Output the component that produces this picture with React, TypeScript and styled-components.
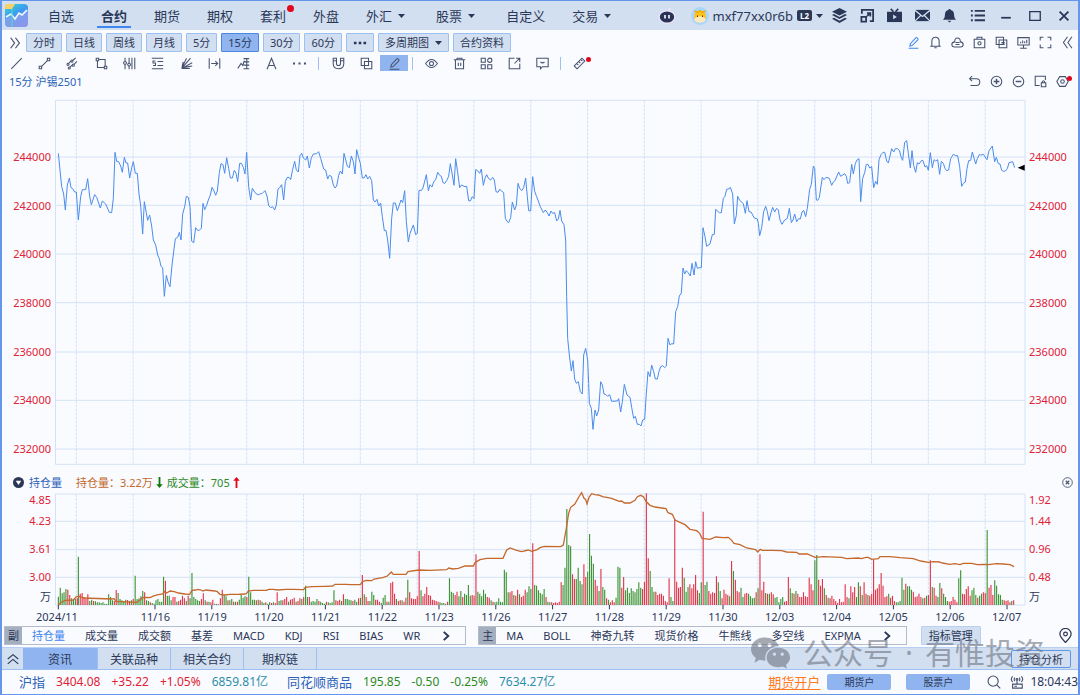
import React from "react";
import styled, { createGlobalStyle } from "styled-components";

const c = {
  bar: "#d2dff1",
  page: "#fafbff",
  line: "#d3e2f6",
  edge: "#6497ea",
  soft: "#9dc0f2",
  active: "#8fb4ef",
  ink: "#2b3757",
  icon: "#46526e",
  blue: "#2c62b8",
  bright: "#3f86f0",
  red: "#e02235",
  green: "#2c8a1e",
  teal: "#2e8ea8",
  orange: "#ff7a1a",
  brown: "#c4682c",
};

const Global = createGlobalStyle`
  * { box-sizing: border-box; }
  body { margin: 0; background: ${c.page}; }
  body, button { font-family: "Noto Sans", "Noto Sans CJK SC", sans-serif; color: ${c.ink}; }
  button { border: 0; padding: 0; margin: 0; background: none; cursor: pointer; }
  svg { display: block; flex: none; }
`;

const Window = styled.div`
  position: relative;
  display: flex;
  flex-direction: column;
  min-height: 100vh;
  border: solid ${c.edge};
  border-width: 1px 2px;
  overflow: hidden;
  font-size: 11px;
  line-height: 16px;
`;

/* ---------- title bar ---------- */
const TitleBar = styled.header`
  display: flex;
  align-items: center;
  height: 29px;
  padding-left: 3px;
  background: ${c.bar};
`;
const Nav = styled.nav`
  display: flex;
  gap: 27px;
  margin-left: 20px;
`;
const NavItem = styled.button<{ $active?: boolean }>`
  position: relative;
  display: flex;
  align-items: center;
  gap: 6px;
  height: 29px;
  font-size: 13px;
  white-space: nowrap;
  font-weight: ${(p) => (p.$active ? 700 : 400)};
  &::after {
    content: "";
    display: ${(p) => (p.$active ? "block" : "none")};
    position: absolute;
    left: -4px;
    right: -4px;
    bottom: 2px;
    height: 2px;
    background: ${c.bright};
  }
`;
const Dot = styled.i<{ $size: number }>`
  position: absolute;
  top: ${(p) => (p.$size > 5 ? 4 : 2)}px;
  right: ${(p) => (p.$size > 5 ? -8 : 1)}px;
  width: ${(p) => p.$size}px;
  height: ${(p) => p.$size}px;
  border-radius: 50%;
  background: #e3061a;
`;
const Account = styled.button`
  display: flex;
  align-items: center;
  height: 29px;
  gap: 4px;
  margin-left: auto;
  font-size: 13px;
`;
const Assistant = styled.span`
  margin-right: 11px;
`;
const Level = styled.span`
  padding: 0 3px;
  border-radius: 2px;
  background: ${c.ink};
  color: #fff;
  font-size: 8px;
  font-weight: 700;
  line-height: 11px;
`;
const IconGroup = styled.div<{ $cols: number; $width: number }>`
  display: grid;
  flex: none;
  grid-template-columns: repeat(${(p) => p.$cols}, 1fr);
  width: ${(p) => p.$width}px;
`;
const IconButton = styled.button<{ $on?: boolean; $tone?: string }>`
  position: relative;
  display: flex;
  align-items: center;
  justify-content: center;
  height: 16px;
  color: ${(p) => p.$tone ?? c.icon};
  background: ${(p) => (p.$on ? c.active : "transparent")};
`;

/* ---------- tool bars ---------- */
const PeriodBar = styled.div`
  display: flex;
  align-items: center;
  gap: 4px;
  height: 25px;
  padding-left: 6px;
`;
const Period = styled.button<{ $active?: boolean }>`
  display: flex;
  align-items: center;
  gap: 6px;
  height: 19px;
  padding: 0 6px;
  border: 1px solid ${(p) => (p.$active ? "#4a86e4" : c.soft)};
  border-radius: 1px;
  background: ${(p) => (p.$active ? c.active : c.bar)};
  font-size: 11px;
  line-height: 16px;
  white-space: nowrap;
`;
const Right = styled.div`
  display: flex;
  margin-left: auto;
`;
const DrawBar = styled.div`
  display: flex;
  align-items: center;
  height: 16px;
`;
const Divider = styled.span`
  width: 1px;
  height: 13px;
  margin: 0 5px 0 4px;
  background: ${c.soft};
`;
const SymbolBar = styled.div`
  display: flex;
  align-items: center;
  height: 21px;
  padding: 0 5px 0 7px;
  color: ${c.blue};
`;

/* ---------- charts ---------- */
const Pane = styled.section`
  display: grid;
  grid-template-columns: 53px minmax(0, 1fr) 53px;
`;
const PricePane = styled(Pane)`
  flex: 1;
  min-height: 365px;
  margin-top: 8px;
`;
const VolumePane = styled(Pane)`
  height: 112px;
`;
const PriceScale = styled.div<{ $side: "left" | "right" }>`
  display: flex;
  flex-direction: column;
  justify-content: space-between;
  padding: 49px 4px 8px;
  color: ${c.red};
  text-align: ${(p) => (p.$side === "left" ? "right" : "left")};
`;
const VolumeScale = styled.div<{ $side: "left" | "right" }>`
  display: grid;
  grid-template-rows: 14px 28px 28px 28px 12px;
  align-items: center;
  padding: 0 4px;
  color: ${c.red};
  text-align: ${(p) => (p.$side === "left" ? "right" : "left")};
  & > :last-child { color: ${c.ink}; }
`;
const Plot = styled.svg`
  width: 100%;
  height: 100%;
  min-height: 0;
  overflow: visible;
`;
const PaneHead = styled.div`
  display: flex;
  align-items: center;
  height: 28px;
  padding: 7px 5px 0 11px;
`;
const PaneTitle = styled.span`
  margin: 0 14px 0 5px;
  color: ${c.blue};
`;
const Reading = styled.span<{ $tone: string }>`
  display: flex;
  align-items: center;
  gap: 3px;
  margin-right: 4px;
  color: ${(p) => p.$tone};
`;
const Dates = styled.div`
  display: flex;
  height: 20px;
  padding: 4px 43px 0 0;
  text-align: center;
`;
const FirstDate = styled.span`
  width: 125px;
  padding-left: 34px;
  text-align: left;
`;
const DateLabel = styled.span`
  flex: 1;
`;

/* ---------- indicator pickers ---------- */
const Indicators = styled.div`
  display: flex;
  align-items: center;
  height: 19px;
  margin: 1px 0 2px 2px;
`;
const Picker = styled.div`
  display: flex;
  align-items: center;
  gap: 20px;
  height: 19px;
  margin-right: 12px;
  padding-right: 13px;
  border: 1px solid #b4bccb;
`;
const PickerName = styled.span`
  width: 17px;
  margin-right: -10px;
  background: #a3aebf;
  line-height: 17px;
  text-align: center;
`;
const PickerItem = styled.button<{ $active?: boolean }>`
  color: ${(p) => (p.$active ? c.bright : c.ink)};
  font-size: 11px;
  line-height: 17px;
  white-space: nowrap;
`;
const Manage = styled(Period)`
  margin-left: 2px;
  padding: 0 7px;
  border-color: #b9d0f2;
`;
const Pin = styled.button`
  margin: 0 5px 0 auto;
`;

/* ---------- bottom tabs and status ---------- */
const Tabs = styled.div`
  display: flex;
  align-items: stretch;
  height: 23px;
  border-top: 1px solid #b7d0f3;
  border-bottom: 1px solid ${c.soft};
  background: ${c.bar};
`;
const Tab = styled.button<{ $active?: boolean }>`
  width: ${(p) => (p.$active ? 75 : 73)}px;
  border-right: 1px solid ${c.soft};
  background: ${(p) => (p.$active ? c.active : "transparent")};
  font-size: 12px;
`;
const Collapse = styled.button`
  display: flex;
  align-items: center;
  justify-content: center;
  width: 21px;
`;
const Analysis = styled.button`
  align-self: center;
  height: 18px;
  margin: 0 7px 0 auto;
  padding: 0 7px;
  border: 1px solid #5f96ea;
  border-radius: 2px;
  font-size: 11px;
`;
const Status = styled.footer`
  display: flex;
  align-items: center;
  height: 24px;
  padding-left: 17px;
  font-size: 12px;
  white-space: nowrap;
`;
const Quote = styled.span<{ $tone: string }>`
  display: flex;
  gap: 11px;
  margin-right: 19px;
  color: ${(p) => p.$tone};
`;
const QuoteName = styled.span`
  color: ${c.blue};
  font-size: 13px;
`;
const Turnover = styled.span`
  color: ${c.teal};
`;
const OpenLink = styled.a`
  margin-left: auto;
  color: ${c.orange};
  font-size: 13px;
  text-underline-offset: 2px;
`;
const AccountButton = styled.button`
  width: 64px;
  height: 16px;
  margin-left: 7px;
  border-radius: 2px;
  background: ${c.active};
  font-size: 10px;
  line-height: 16px;
  & + & { margin-left: 15px; }
`;
const Clock = styled.time`
  margin-left: 6px;
`;
const StatusIcons = styled.div`
  display: flex;
  gap: 9px;
  margin-left: 17px;
  color: ${c.icon};
`;
const Watermark = styled.div`
  position: absolute;
  right: 33px;
  bottom: 23px;
  display: flex;
  align-items: center;
  gap: 12px;
  color: #6e7480;
  font-size: 30px;
  line-height: 36px;
  opacity: 0.6;
  pointer-events: none;
`;

/* ---------- icons ---------- */
const Icon = ({ children, size = 14, w = 1.3 }: { children: React.ReactNode; size?: number; w?: number }) => (
  <svg width={size} height={size} viewBox="0 0 16 16" fill="none" stroke="currentColor" strokeWidth={w} aria-hidden="true">
    {children}
  </svg>
);
const Caret = ({ width = 7 }: { width?: number }) => (
  <svg width={width} height="8" viewBox={`0 0 ${width} 8`} aria-hidden="true">
    <path d="M0 2h7L3.500 6z" fill={c.ink} />
  </svg>
);
const pencil = <path d="M3.500 12.500l.6-3 6.700-7.200q.8-.7 1.600 0l.9.9q.7.800 0 1.600l-6.900 7zM2 15h12" />;
const copy = <path d="M1.500 1.500h9v9h-9zM5.500 5.500h9v9h-9z" />;

const drawTools: [string, React.ReactNode][] = [
  ["直线", <path d="M1.500 14.500L14.500 1.500" />],
  ["线段", <path d="M4.500 11.500l7-7M1.500 11.500h3v3h-3zM11.500 1.500h3v3h-3z" />],
  ["平行线", <><path d="M3.500 7.500L6 5M8.500 4L12 1M5 12.500l2.500-2.500M10 9l3.500-3.500" /><circle cx="2.500" cy="9" r="1.300" /><circle cx="7.300" cy="5" r="1.300" /><circle cx="4" cy="13.500" r="1.300" /><circle cx="9" cy="10" r="1.300" /></>],
  ["矩形", <path d="M4.500 3h8v8.500M3 4.500V13h8.500M1.500 1.500h3v3h-3zM11.500 11.500h3v3h-3z" />],
  ["周期线", <><path d="M2.500 1v4.500M2.500 9v6M7.500 1v6.500M7.500 11v4M11 1v14M14.500 1v14" /><circle cx="2.500" cy="7.300" r="1.700" /><circle cx="7.500" cy="9.300" r="1.700" /></>],
  ["黄金分割", <path d="M1 1.500h14M1 14.500h14M8 10.500h7M8 5.500h7M5.500 5H2.500v2.500h3V10.500h-3" />],
  ["扇形线", <path d="M2 14L13 1.500M2 14L8 1.500M2 14l13-7M2 14h10M3 13l12-2M2.500 12L4 6" />],
  ["测距", <path d="M1.500 1.500v13M14.500 1.500v13M4 8h8M9 5l3 3-3 3" />],
  ["标尺", <path d="M1 14l4-6 2 2.500 2-6M8 2h7M9 6h6M8 10h7M8 14.500h7M12 2v12.500" />],
  ["文字", <path d="M2.500 15L8 1.500 13.500 15M4.500 10.500h7" />],
  ["更多", <path d="M0 8h2.500M6.800 8h2.500M13.500 8h2.500" strokeWidth="2.200" />],
];
const modeTools: [string, React.ReactNode][] = [
  ["磁吸", <path d="M1.500 1.500H5.500V8Q5.500 10.500 8 10.500T10.500 8V1.500H14.500V8Q14.500 14.500 8 14.500T1.500 8zM1.500 4.500h4M10.500 4.500h4" />],
  ["复制", copy],
  ["画线", pencil],
];
const viewTools: [string, React.ReactNode][] = [
  ["显示", <><path d="M.7 8Q8-2 15.300 8 8 18 .7 8z" /><circle cx="8" cy="8" r="2.500" /></>],
  ["删除", <path d="M1 3.500h14M5 3V1.500h6V3M3 3.500v11h10v-11M6.500 7v4M9.500 7v4" />],
  ["布局", <><path d="M1.500 1.500h5v5h-5zM1.500 9.500h5v5h-5zM9.500 9.500h5v5h-5z" /><circle cx="12" cy="4" r="2.600" /></>],
  ["导出", <path d="M8 1.500H1.500v13h13V8M10 1.500h4.500V6M14.500 1.500L8 8" />],
  ["备注", <path d="M1 1.500h14v10.500H8l-2.500 2.500V12H1zM5.500 6q2.500 2.500 5 0" />],
];
const panelTools: [string, React.ReactNode][] = [
  ["画线", pencil],
  ["预警", <path d="M1.500 12.500h13M3.500 12V6.500q0-5 4.500-5t4.500 5V12M6.500 14.500h3" />],
  ["云端", <><path d="M4.500 13.500Q1 13.500 1 10.500t3.500-3.300Q4.500 2.500 8 2.500t3.500 4.700Q15 7.500 15 10.500t-3.500 3z" /><path d="M5.500 8h5M5.500 10.500h5" /></>],
  ["截图", <><path d="M1.500 4h13v10.500h-13zM5 4V1.500h6V4" /><circle cx="8" cy="9" r="2" /></>],
  ["叠加", <path d="M1.500 1.500h9v9h-9zM5 5h9.500v9.500H5zM8 8h4M8 10h4" />],
  ["投屏", <path d="M1 2h14v9H1zM4 15h8M8 11v4M4.500 9V7M7 9V5.500M9.500 9V6.500M12 9V4.500" />],
  ["全屏", <path d="M1.500 5.500v-4h4M10.500 1.500h4v4M14.500 10.500v4h-4M5.500 14.500h-4v-4" />],
  ["收起", <path d="M8 1L3 8l5 7M13.500 1l-5 7 5 7" />],
];
const symbolTools: [string, React.ReactNode][] = [
  ["撤销", <path d="M5 1.500L2 4.500l3 3M2 4.500h8.500q4 0 4 4.200t-4 4.300H3" />],
  ["放大", <><circle cx="8" cy="8" r="6.500" /><path d="M4.500 8h7M8 4.500v7" strokeWidth="1.800" /></>],
  ["缩小", <><circle cx="8" cy="8" r="6.500" /><path d="M4.500 8h7" strokeWidth="1.800" /></>],
  ["锁定", <path d="M14 6V1.500H1.500V13H7M9 9.500h5.500v5H9zM10 9.500q0-2.500 1.700-2.500t1.700 2.500" />],
  ["设置", <><path d="M4.500 2h7L15 8l-3.500 6h-7L1 8z" /><circle cx="8" cy="8" r="2.200" /></>],
];
const windowTools: [string, React.ReactNode][] = [
  ["层级", <g fill="currentColor" stroke="none"><path d="M8 0l8 4-8 4-8-4z" /><path d="M0 7.500l2.200-1L8 9.500l5.800-3 2.200 1-8 4.200z" /><path d="M0 11.500l2.200-1L8 13.500l5.800-3 2.200 1-8 4.500z" /></g>],
  ["缩放", <path d="M2 6V2h12v12h-3.500M1.500 9.500h5v5h-5zM7.500 8.500L11 5.500M7.500 5.500H11V9" strokeWidth="1.900" />],
  ["直播", <><path d="M0 4h16v11H0z" fill="currentColor" stroke="none" /><path d="M4 1l3 3M12 1L9 4" strokeWidth="1.800" /><path d="M6.500 7v5l4-2.500z" fill={c.bar} stroke="none" /></>],
  ["消息", <><path d="M0 2h16v12H0z" fill="currentColor" stroke="none" /><path d="M0 2.500l8 6.500 8-6.500M0 14l6-6M16 14l-6-6" stroke={c.bar} /></>],
  ["提醒", <path d="M1 12.500q2-1.500 2-4Q3 2.500 7 2.200V1h2v1.200q4 .3 4 6.300 0 2.500 2 4zM6 13.500h4l-2 2z" fill="currentColor" stroke="none" />],
  ["菜单", <path d="M1 3h2M5 3h11M1 8h2M5 8h11M1 13h2M5 13h11" strokeWidth="2" />],
];
const frameTools: [string, React.ReactNode][] = [
  ["最小化", <path d="M2.500 10h11" strokeWidth="2" />],
  ["最大化", <path d="M2 3h12v10H2z" strokeWidth="1.500" />],
  ["关闭", <path d="M3 3l10 10M13 3L3 13" strokeWidth="2.200" />],
];

const Tools = ({ items, on, tint, dot, cols, width, size, tone }: {
  items: [string, React.ReactNode][]; on?: number; tint?: number; dot?: number; cols: number; width: number; size?: number; tone?: string;
}) => (
  <IconGroup $cols={cols} $width={width}>
    {items.map(([label, shape], i) => (
      <IconButton key={label} aria-label={label} $on={i === on} $tone={i === tint ? c.bright : tone}>
        <Icon size={size ?? 13}>{shape}</Icon>
        {i === dot && <Dot $size={5} />}
      </IconButton>
    ))}
  </IconGroup>
);

const Logo = () => (
  <svg width="23" height="23" viewBox="0 0 23 23" aria-hidden="true">
    <defs>
      <linearGradient id="logo" x1="0" y1="0" x2=".6" y2="1">
        <stop offset="0" stopColor="#39d8d0" />
        <stop offset=".5" stopColor="#3d9cf0" />
        <stop offset="1" stopColor="#7a78e0" />
      </linearGradient>
    </defs>
    <rect width="23" height="23" rx="4" fill="url(#logo)" />
    <path d="M0 15l5-3 4 3 4-6 4 2 6-5v13q0 4-4 4H4q-4 0-4-4z" fill="#8fa4ef" opacity=".7" />
    <path d="M1 13l5-3 4 5 4-6 3 2 5-5" fill="none" stroke="#f4fbff" strokeWidth="1.600" />
    <path d="M1 0h9L7 5H0V2z" fill="#f5d267" />
    <path d="M7 5v18" stroke="#4de0b8" strokeWidth="1" />
  </svg>
);
const Robot = () => (
  <svg width="18" height="18" viewBox="0 0 18 18" aria-hidden="true">
    <ellipse cx="9" cy="10" rx="8.500" ry="6.800" fill="#f0e4f8" />
    <path d="M11 4l1-3" stroke="#f3e9fa" />
    <ellipse cx="9" cy="10" rx="7.200" ry="5.500" fill="#2b3257" />
    <path d="M7 8v3.500M11 8v3.500" stroke="#fff" strokeWidth="1.600" />
  </svg>
);
const Avatar = () => (
  <svg width="18" height="18" viewBox="0 0 18 18" aria-hidden="true">
    <circle cx="9" cy="9" r="9" fill="#a9d6fa" />
    <circle cx="9" cy="9.500" r="6" fill="#fcc21b" />
    <ellipse cx="9" cy="12.500" rx="5.500" ry="3.300" fill="#fde9c0" />
    <path d="M3.500 4l4 1.500M14.500 4l-4 1.500M9 3v2" stroke="#f2a900" strokeWidth="1.800" />
    <path d="M6.500 8.500v1.500M11.500 8.500v1.500" stroke="#5c3b12" />
  </svg>
);

/* ---------- data, in thirds of a plot pixel ---------- */
const join = (...parts: [number, string][]) =>
  parts
    .map(([dx, pts]) => pts.split(" ").map((p) => { const [x, y] = p.split(","); return `${+x + dx},${y}`; }).join(" "))
    .join(" ");

const price = join(
  [0, "175,190 180,240 185,290 191,312 196,360 202,285 208,264 213,293 218,296 224,306 229,306 235,390 242,320 247,299 257,299 263,266 269,318 274,344 284,314 290,322 301,354 307,333 317,342 328,367 335,368 340,325 345,187 350,214 356,215 362,228 367,247 373,202 378,219 383,219 389,264 395,234 400,215 406,250 412,250 417,312 422,346 428,432 433,335 443,391 449,375 455,408 460,450 467,465 473,495 478,506 483,529 488,533 493,619 499,556 505,579 510,590 516,525 526,446 533,442 538,427 543,450 548,372 554,350 559,319 565,322 570,350 575,453 581,459 587,413 593,421 598,421 604,415 609,340 614,359 620,346 625,330 631,315 636,292 642,303 647,316 652,303 658,248 663,221 669,224 674,250 680,203 686,235 691,264 697,264 703,241 708,250 713,275 719,220 724,220 730,232 735,252 740,187 746,290 752,330 757,295 765,308 774,315 781,311 786,311 795,302 801,318 806,347 812,353 818,350 824,360 829,345 834,297 839,293 845,284 851,330 856,275 861,263 867,262 872,269 878,238 884,214 889,240 895,246 900,197 905,190 910,204 917,210 922,198 928,234 934,203 940,192 950,191 956,185 962,205 971,237 977,240 983,267 988,256 994,259 1000,285 1005,294 1010,288 1016,256 1021,243 1027,252 1032,190 1042,229 1048,233"],
  [1050, "4,198 10,215 15,252 20,179 26,203 31,220 37,264 42,264 48,254 53,267 59,259 65,272 70,330 75,336 81,328 86,348 92,339 97,380 103,422 108,421 113,450 119,505 125,385 130,339 136,339 142,362 147,348 153,330 158,338 164,302 169,395 175,456 180,430 190,405 197,434 202,430 207,301 215,301 219,294 229,254 235,302 240,284 246,291 251,276 257,269 263,247 269,256 274,259 279,278 284,280 290,272 296,259 301,221 307,255 312,286 317,206 323,247 329,293 334,285 345,290 350,289 356,332 361,333 367,320 372,326 377,239 383,242 389,250 394,237 400,286 405,265 410,254 416,266 422,270 428,262 433,270 438,305 444,307 449,298 455,303 461,308 466,385 471,394 476,398 482,383 487,336 494,360 499,346 504,280 509,295 515,302 521,293 527,264 532,320 536,362 542,363 548,260 554,304 560,320 566,336 571,350 580,368 586,360 592,368 597,378 603,363 608,370 614,368 620,393 625,387 630,361 635,393 642,404 647,450 650,620 653,745 658,795 664,843 669,812 674,867 679,880 685,875 691,905 697,912 701,795 707,775 713,810 716,880 718,940 724,955 729,1018 735,960 740,978 746,960 752,875 757,885 762,912 768,914 773,919 779,914 785,934 802,933 806,926 812,966 817,935 823,883 831,915 840,922 845,952 851,985 856,979 862,1003 868,1003 873,1008 878,990 884,988 889,910 894,845 900,860 905,825 911,845 916,867 922,867 927,844 932,830 938,827 944,833 949,828 954,745 960,765 965,761 971,762 977,665 983,650 988,618 994,609 999,534 1004,552 1009,542 1014,548 1021,558 1026,520 1032,555 1037,515 1042,535 1049,533"],
  [2100, "4,533 9,413 15,440 20,469 30,462 37,434 43,433 47,358 58,368 64,368 70,325 75,319 80,298 88,296 91,292 98,312 103,402 109,376 113,319 119,331 130,341 136,370 141,332 147,365 153,366 163,384 172,387 175,400 179,437 185,413 191,365 197,349 202,365 207,392 213,368 218,352 224,366 230,355 235,360 240,390 246,403 254,390 262,385 268,355 274,398 279,390 284,372 290,395 296,386 301,387 306,366 311,361 317,380 322,355 329,298 334,283 340,228 344,235 349,330 353,331 358,322 367,262 372,269 378,262 388,265 395,286 400,276 405,272 416,246 422,259 434,251 439,259 443,280 449,278 455,223 460,252 466,220 471,210 477,206 482,335 488,265 494,248 499,223 504,223 509,234 515,230 521,293 527,274 532,283 537,209 543,194 549,187 554,187 560,213 565,219 575,176 581,186 586,176 592,176 598,181 604,203 608,211 614,157 620,152 625,190 631,234 636,182 641,226 647,247 652,218 657,222 665,211 669,212 675,231 680,227 685,241 691,188 697,233 702,209 707,213 713,209 719,253 724,214 730,220 735,235 740,242 746,240 752,206 760,193 767,197 773,197 779,230 785,289 790,280 796,276 801,235 806,212 812,211 817,186 827,222 832,206 838,194 844,195 850,193 861,209 867,182 877,168 884,215 889,202 895,221 900,222 905,241 910,244 916,243 922,236 927,218 938,215 944,233"],
);
const holdings = join(
  [0, "175,405 185,396 196,391 220,390 229,380 240,379 250,384 335,387 342,386 348,394 410,397 420,390 427,383 437,382 450,383 463,377 475,374 488,372 493,365 500,369 510,363 523,365 535,369 555,372 569,373 576,361 587,360 594,358 603,360 609,363 617,360 645,363 652,365 660,373 675,375 690,373 713,373 735,372 740,370 745,363 760,361 800,361 805,358 820,358 832,360 858,358 880,358 905,359 911,359 916,352 935,350 975,349 998,348 1005,343 1040,343"],
  [1050, "0,344 31,344 37,335 48,331 65,332 72,327 98,323 112,318 124,306 130,313 168,313 174,305 205,300 240,301 290,299 296,294 308,297 325,295 345,288 370,288 376,277 390,269 410,265 459,265 470,240 480,234 500,241 515,245 535,240 545,244 560,240 570,233 583,229 632,230 640,225 648,180 656,130 662,112 674,103 690,75 695,68 702,85 707,88 711,102 717,82 725,71 735,74 745,75 758,80 785,85 800,91 807,94 815,93 823,99 840,99 855,91 862,80 872,76 880,80 888,94 900,106 915,111 935,114 948,116 954,128 967,133 975,150 990,157 1005,164 1020,178 1040,182 1049,190"],
  [2100, "6,205 30,208 47,201 70,203 85,202 95,211 102,220 120,224 140,234 167,239 173,246 181,238 187,241 215,241 245,242 260,246 290,247 297,252 322,252 345,262 370,260 425,262 440,266 475,264 485,266 498,262 505,262 515,268 535,266 540,260 570,260 600,263 640,266 662,273 685,277 700,275 718,276 727,279 750,283 765,281 780,284 790,280 815,280 832,284 852,283 865,284 890,281 910,282 930,284 942,290"],
);

/* Volume per bar, one row per trading day; a negative value is a falling bar. */
const days = [
  [-25, -52, -35, -38, -48, 46, 30, -20, -18, -18, 20],
  [-145, 34, 36, 24, 18, 32, -12, -16, 12, -11, -8, -8, -6, -8, -4, -3, -32, -24, -14, 12, 45, -36, -18, -14, -12, -16, 15, 12, -14, 18],
  [-88, -18, -20, -26, -42, 38, -14, -12, 8, -6, -4, -14, -18, -10, -10, -85, 73, -28, -28, -14, 24, 24, -10, 12, 16, 28, 20, -12, 28, -20],
  [-96, -24, -18, -14, -12, 18, 35, -14, 10, -10, 8, 16, -4, 3, -2, 20, 46, -30, -26, 14, -14, -18, 10, -10, 10, -16, -34, -22, -26, 24],
  [-85, -38, -16, -16, 14, -16, 14, -10, -6, 8, -4, -8, 6, -8, 6, 38, -12, -14, 14, 18, 24, -10, 16, 18, 22, -10, 12, 20, -18, 24],
  [-58, -24, 24, -10, -12, -10, -18, 12, -10, -6, -4, 10, -8, -6, -8, -44, 14, 12, 16, -12, 32, -18, -18, -16, -14, 12, -16, -10, 20, -22],
  [90, -32, 24, 12, -12, -40, -30, 16, 16, 10, -6, -22, -30, 10, -10, 66, 70, 34, -18, 12, 14, -14, 10, 22, -76, 38, 20, 18, 18, 26],
  [162, -44, 26, 34, 54, 30, 28, 16, 14, 12, 10, -8, -6, -6, -4, 10, -80, -40, -36, 30, 40, -26, -42, 24, -34, -30, -60, -28, 30, 28],
  [152, -40, -34, -26, -46, -34, 24, 22, -14, 10, -8, -10, -20, -10, -8, -106, -98, -38, 38, 42, -30, 28, 46, -32, 24, 28, 46, -38, -56, -48],
  [185, -60, -58, -44, -36, -32, -48, 24, -10, -8, 8, 6, 8, 6, 10, 68, -60, -112, -288, -180, -176, 92, 78, -78, -112, -72, -62, 122, 84, -100],
  [-213, -148, -124, 76, 58, -42, 108, -54, -46, 20, -16, 8, 14, 8, -22, -115, -112, 52, 84, -44, -52, -36, -50, -42, -38, -48, -68, -52, 48, 70],
  [335, 140, -102, -54, -40, 40, 30, 34, 34, 28, 12, 8, 80, -24, -12, 258, 70, 52, 54, 112, -82, -40, -54, 62, 50, 62, 90, 44, -36, -68],
  [280, -60, -70, 42, 34, 38, 36, 86, -68, -42, 20, 46, 34, 30, -26, 132, -102, 76, 42, 38, -52, -24, 34, 36, -34, -26, -20, -22, 38, -50],
  [152, 44, 70, -36, 34, -34, 38, 32, -22, -24, -8, -18, -24, 10, 12, 84, -50, -36, 34, -42, 34, 24, 24, 38, 26, 24, 82, 62, 44, -134],
  [-150, 76, 58, 78, -50, 30, -22, 20, 28, 18, 12, 6, 18, 8, 10, 62, 24, -20, 56, 38, 54, -24, -68, 56, -30, 68, 34, -30, 28, 34],
  [136, 46, 50, 62, 96, 58, 24, 26, -34, 22, 28, 12, -8, -8, -12, -82, -46, 64, -56, -56, -46, 40, 24, 26, 34, 24, -20, 22, -28, 30],
  [134, -54, 52, 28, -24, -66, 50, -34, -24, -12, 10, 12, 24, 16, 8, -80, -104, 34, 32, 48, 56, 28, -44, -52, -30, 22, -28, -34, 38, 36],
  [-225, 52, 60, 30, -74, -58, -32, -30, -16, 14, 12, 14, 8, -12, 14],
];
const bars = days.flatMap((day, d) => {
  const start = d === 0 ? 175 : 235 + (d - 1) * 170.4;
  return day.map((v, i) => ({ x: start + i * 5.68, v }));
});
const barPath = (rising: boolean) =>
  bars.filter((b) => b.v > 0 === rising).map((b) => `M${(b.x - 1.6).toFixed(1)} 405v${-Math.abs(b.v)}h3.4V405z`).join("");

const dayLines = Array.from({ length: 17 }, (_, i) => 229 + i * 170.4);
const ticks = [175, ...Array.from({ length: 16 }, (_, i) => 465 + i * 170.4)];
const prices = ["244000", "242000", "240000", "238000", "236000", "234000", "232000"];
const dates = ["11/16", "11/19", "11/20", "11/21", "11/22", "11/23", "11/26", "11/27", "11/28", "11/29", "11/30", "12/03", "12/04", "12/05", "12/06", "12/07"];

const Grid = ({ top, bottom, rows }: { top: number; bottom: number; rows: number[] }) => (
  <g fill="none" stroke={c.line} strokeWidth="1">
    <path vectorEffect="non-scaling-stroke" d={`M166.500 ${top}V${bottom}H3075V${top}z` + rows.map((y) => `M166 ${y}H3075`).join("")} />
    <path vectorEffect="non-scaling-stroke" strokeDasharray="3 1" d={dayLines.map((x) => `M${x} ${top}V${bottom}`).join("")} />
  </g>
);
const Arrow = ({ up }: { up?: boolean }) => (
  <svg width="7" height="11" viewBox="0 0 7 12" aria-hidden="true">
    <path d={up ? "M3.500 0L7 4H4.500v8h-2V4H0z" : "M3.500 12L7 8H4.500V0h-2v8H0z"} fill={up ? "#e3061a" : "#12780c"} />
  </svg>
);
const Next = () => (
  <Icon size={12}><path d="M5 2.500l6 5.500-6 5.500" strokeWidth="2.600" /></Icon>
);

const subCharts = ["持仓量", "成交量", "成交额", "基差", "MACD", "KDJ", "RSI", "BIAS", "WR"];
const mainCharts = ["MA", "BOLL", "神奇九转", "现货价格", "牛熊线", "多空线", "EXPMA"];
const menu = ["自选", "合约", "期货", "期权", "套利", "外盘", "外汇", "股票", "自定义", "交易"];
const withCaret = ["外汇", "股票", "交易"];

export default function App() {
  return (
    <>
      <Global />
      <Window>
        <TitleBar>
          <Logo />
          <Nav>
            {menu.map((m) => (
              <NavItem key={m} $active={m === "合约"}>
                {m}
                {withCaret.includes(m) && <Caret width={11} />}
                {m === "套利" && <Dot $size={7} />}
              </NavItem>
            ))}
          </Nav>
          <Account>
            <Assistant><Robot /></Assistant>
            <Avatar />
            mxf77xx0r6b
            <Level>L2</Level>
            <Caret width={10} />
          </Account>
          <Tools items={windowTools} cols={6} width={165} size={15} tone={c.ink} />
          <Tools items={frameTools} cols={3} width={87} size={14} tone={c.ink} />
        </TitleBar>

        <PeriodBar>
          <IconButton aria-label="展开"><Icon size={14} w={1.4}><path d="M3 2l4.500 6L3 14M8.500 2l4.500 6-4.500 6" /></Icon></IconButton>
          {["分时", "日线", "周线", "月线", "5分", "15分", "30分", "60分"].map((p) => (
            <Period key={p} $active={p === "15分"}>{p}</Period>
          ))}
          <Period aria-label="更多周期">
            <Icon size={14}><path d="M1 8h3M6.500 8h3M12 8h3" strokeWidth="2.800" /></Icon>
          </Period>
          <Period>多周期图 <Caret /></Period>
          <Period>合约资料</Period>
          <Right><Tools items={panelTools} cols={8} width={176} tint={0} /></Right>
        </PeriodBar>

        <DrawBar>
          <Tools items={drawTools} cols={11} width={312} />
          <Divider />
          <Tools items={modeTools} cols={3} width={84} on={2} />
          <Divider />
          <Tools items={viewTools} cols={5} width={138} />
          <Divider />
          <Tools
            items={[["测量", <path d="M1.500 11l9.500-9.500 3.500 3.500L5 14.500zM4.500 8l2 2M7 5.500l2 2M9.500 3l2 2" />]]}
            cols={1}
            width={26}
            dot={0}
          />
        </DrawBar>

        <SymbolBar>
          15分 沪锡2501
          <Right><Tools items={symbolTools} cols={5} width={110} dot={4} /></Right>
        </SymbolBar>

        <PricePane>
          <PriceScale $side="left">{prices.map((p) => <span key={p}>{p}</span>)}</PriceScale>
          <Plot viewBox="165 30 2910 1095" preserveAspectRatio="none">
            <Grid top={31} bottom={1123} rows={[201, 346, 492, 638, 786, 931, 1077]} />
            <polyline points={price} fill="none" stroke="#4a8cec" strokeWidth="1" vectorEffect="non-scaling-stroke" />
            <path d="M3053 233l21-9v18z" fill="#000" />
          </Plot>
          <PriceScale $side="right">{prices.map((p) => <span key={p}>{p}</span>)}</PriceScale>
        </PricePane>

        <PaneHead>
          <Icon size={11}>
            <circle cx="8" cy="8" r="8" fill={c.ink} stroke="none" />
            <path d="M4 5.500h8l-4 6z" fill="#fff" stroke="none" />
          </Icon>
          <PaneTitle>持仓量</PaneTitle>
          <Reading $tone={c.brown}>持仓量：3.22万 <Arrow /></Reading>
          <Reading $tone={c.green}>成交量：705 <Arrow up /></Reading>
          <Right>
            <IconButton aria-label="关闭副图">
              <Icon size={11}><circle cx="8" cy="8" r="7" /><path d="M5.500 5.500l5 5M10.500 5.500l-5 5" strokeWidth="1.800" /></Icon>
            </IconButton>
          </Right>
        </PaneHead>

        <VolumePane>
          <VolumeScale $side="left">{["4.85", "4.23", "3.61", "3.00", "万"].map((v) => <span key={v}>{v}</span>)}</VolumeScale>
          <Plot viewBox="165 69 2910 336" preserveAspectRatio="none">
            <Grid top={72} bottom={405} rows={[154, 239, 322]} />
            <path d={barPath(false)} fill="#3d9433" />
            <path d={barPath(true)} fill="#e2364a" />
            <polyline points={holdings} fill="none" stroke={c.brown} strokeWidth="1.3" vectorEffect="non-scaling-stroke" />
            <path d={ticks.map((x) => `M${x} 405v13`).join("")} stroke={c.ink} vectorEffect="non-scaling-stroke" />
          </Plot>
          <VolumeScale $side="right">{["1.92", "1.44", "0.96", "0.48", "万"].map((v) => <span key={v}>{v}</span>)}</VolumeScale>
        </VolumePane>

        <Dates>
          <FirstDate>2024/11</FirstDate>
          {dates.map((d) => <DateLabel key={d}>{d}</DateLabel>)}
        </Dates>

        <Indicators>
          <Picker>
            <PickerName>副</PickerName>
            {subCharts.map((s) => <PickerItem key={s} $active={s === "持仓量"}>{s}</PickerItem>)}
            <PickerItem aria-label="更多副图指标"><Next /></PickerItem>
          </Picker>
          <Picker>
            <PickerName>主</PickerName>
            {mainCharts.map((s) => <PickerItem key={s}>{s}</PickerItem>)}
            <PickerItem aria-label="更多主图指标"><Next /></PickerItem>
          </Picker>
          <Manage>指标管理</Manage>
          <Pin aria-label="定位">
            <Icon size={15}><path d="M8 15.500Q2 9.500 2 6.500a6 6 0 0112 0Q14 9.500 8 15.500z" /><circle cx="8" cy="6.500" r="2" /></Icon>
          </Pin>
        </Indicators>

        <Tabs>
          <Collapse aria-label="展开资讯"><Icon size={14}><path d="M2 8l6-5 6 5M2 13.500l6-5 6 5" /></Icon></Collapse>
          <Tab $active>资讯</Tab>
          <Tab>关联品种</Tab>
          <Tab>相关合约</Tab>
          <Tab>期权链</Tab>
          <Analysis>持仓分析</Analysis>
        </Tabs>

        <Status>
          <Quote $tone={c.red}>
            <QuoteName>沪指</QuoteName><span>3404.08</span><span>+35.22</span><span>+1.05%</span><Turnover>6859.81亿</Turnover>
          </Quote>
          <Quote $tone={c.green}>
            <QuoteName>同花顺商品</QuoteName><span>195.85</span><span>-0.50</span><span>-0.25%</span><Turnover>7634.27亿</Turnover>
          </Quote>
          <OpenLink href="#open">期货开户</OpenLink>
          <AccountButton>期货户</AccountButton>
          <AccountButton>股票户</AccountButton>
          <StatusIcons>
            <Icon size={14}><circle cx="7" cy="7" r="5.800" /><path d="M11.200 11.200l4 4" /></Icon>
            <Icon size={14}><path d="M3 10.500h11v4.500H3zM8 10.500V6M5.500 7q-1.500-2 0-4M10.500 7q1.500-2 0-4M3 8Q0 5 3 1.500M13 8q3-3 0-6.500M5 12.800h3" /><circle cx="8" cy="5" r="1" /></Icon>
          </StatusIcons>
          <Clock>18:04:43</Clock>
        </Status>

        <Watermark>
          <svg width="41" height="34" viewBox="0 0 42 34" aria-hidden="true">
            <path fillRule="evenodd" fill="currentColor" d="M15 1C7 1 1 6.500 1 13c0 4 2 7 5 9l-1.500 5 5.500-3c2 .6 4 .8 6 .7C14 17 20 10 29.500 10 28 4.500 22 1 15 1zM10 7a2 2 0 110 4 2 2 0 010-4zm10 0a2 2 0 110 4 2 2 0 010-4z" />
            <path fillRule="evenodd" fill="currentColor" d="M29 11.500c-7 0-12 4.500-12 10s5 10 12 10c1.500 0 3-.2 4.500-.7L38 33l-1.200-4c2.600-1.800 4.200-4.500 4.200-7.500 0-5.500-5-10-12-10zM25 16.500a1.700 1.700 0 110 3.400 1.700 1.700 0 010-3.400zm8 0a1.700 1.700 0 110 3.400 1.700 1.700 0 010-3.400z" />
          </svg>
          <span>公众号</span>
          <span>·</span>
          <span>有惟投资</span>
        </Watermark>
      </Window>
    </>
  );
}
